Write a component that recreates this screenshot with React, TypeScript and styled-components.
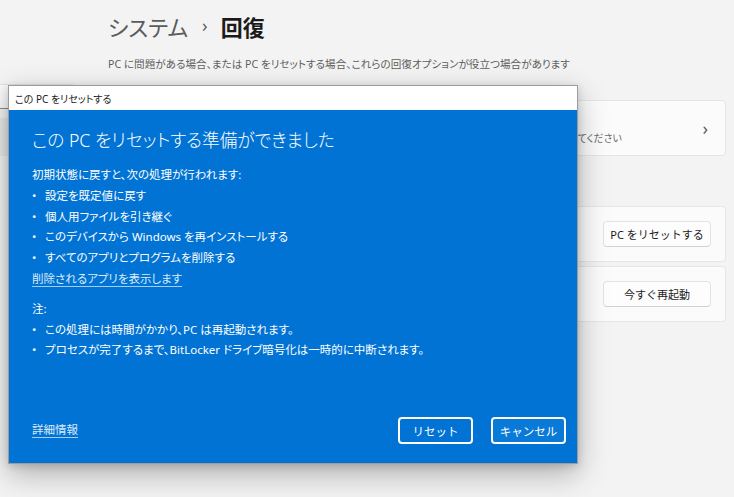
import styled, { createGlobalStyle } from "styled-components";

const GlobalStyle = createGlobalStyle`
  html, body {
    margin: 0;
    padding: 0;
    background: #f3f3f3;
  }
  body {
    font-family: "Noto Sans", "Noto Sans CJK JP", sans-serif;
    font-feature-settings: "palt";
  }
`;

const resetItems = [
  "設定を既定値に戻す",
  "個人用ファイルを引き継ぐ",
  "このデバイスから Windows を再インストールする",
  "すべてのアプリとプログラムを削除する",
];

const notes = [
  "この処理には時間がかかり、PC は再起動されます。",
  "プロセスが完了するまで、BitLocker ドライブ暗号化は一時的に中断されます。",
];

export default function App() {
  return (
    <>
      <GlobalStyle />
      <Screen>
        <Sidebar>
          <SearchBox />
          <NavItem active />
          <NavItem>
            <NavLabel>アカウント</NavLabel>
          </NavItem>
        </Sidebar>
        <Main>
          <Breadcrumb>
            <Crumb>システム</Crumb>
            <Sep>›</Sep>
            <Current>回復</Current>
          </Breadcrumb>
          <Subtitle>
            PC に問題がある場合、または PC をリセットする場合、これらの回復オプションが役立つ場合があります
          </Subtitle>
          <FixCard>
            <CardText>
              <CardTitle>問題の修正</CardTitle>
              <CardDesc>
                PC をリセットする前に、トラブルシューティング ツールを実行して、PC の問題を解決できるかどうか試してみてください
              </CardDesc>
            </CardText>
            <Chevron>›</Chevron>
          </FixCard>
          <SectionTitle>回復オプション</SectionTitle>
          <CardGroup>
            <Card>
              <CardText>
                <CardTitle>この PC をリセット</CardTitle>
              </CardText>
              <PageButton>PC をリセットする</PageButton>
            </Card>
            <Card>
              <CardText>
                <CardTitle>高度なスタートアップ</CardTitle>
              </CardText>
              <PageButton>今すぐ再起動</PageButton>
            </Card>
          </CardGroup>
        </Main>

        <Dialog>
          <TitleBar>この PC をリセットする</TitleBar>
          <Body>
            <Heading>この PC をリセットする準備ができました</Heading>
            <Content>
              <Line>初期状態に戻すと、次の処理が行われます:</Line>
              <List>
                {resetItems.map((t) => (
                  <li key={t}>{t}</li>
                ))}
              </List>
              <Link>削除されるアプリを表示します</Link>
              <Line spaced>注:</Line>
              <List>
                {notes.map((t) => (
                  <li key={t}>{t}</li>
                ))}
              </List>
            </Content>
            <Footer>
              <Link>詳細情報</Link>
              <Buttons>
                <DialogButton>リセット</DialogButton>
                <DialogButton focused>キャンセル</DialogButton>
              </Buttons>
            </Footer>
          </Body>
        </Dialog>
      </Screen>
    </>
  );
}

const Screen = styled.div`
  position: relative;
  width: 734px;
  height: 497px;
  overflow: hidden;
  display: flex;
  background: #f3f3f3;
`;

const Sidebar = styled.div`
  width: 75px;
  flex-shrink: 0;
  padding-top: 84px;
  display: flex;
  flex-direction: column;
  overflow: hidden;
`;

const SearchBox = styled.div`
  height: 23px;
  background: #f9f9f9;
  border-top: 1px solid #e2e2e2;
  border-bottom: 1px solid #8a8a8a;
  border-right: 1px solid #e2e2e2;
  border-radius: 0 4px 4px 0;
`;

const NavItem = styled.div<{ active?: boolean }>`
  height: 38px;
  margin-top: ${(p) => (p.active ? "9px" : "33px")};
  background: ${(p) => (p.active ? "#e9e9e9" : "transparent")};
  display: flex;
  align-items: center;
  font-size: 11px;
  color: #1a1a1a;
  white-space: nowrap;
`;

const NavLabel = styled.span`
  margin-left: -48px;
`;

const Main = styled.div`
  flex: 1;
  min-width: 0;
  padding: 9px 8px 0 33px;
  display: flex;
  flex-direction: column;
`;

const Breadcrumb = styled.div`
  display: flex;
  align-items: center;
  height: 34px;
  font-size: 22px;
`;

const Crumb = styled.span`
  color: #5b5b5b;
`;

const Sep = styled.span`
  color: #5b5b5b;
  font-size: 18px;
  margin: 0 13px 2px 14px;
`;

const Current = styled.span`
  color: #1b1b1b;
  font-weight: 700;
`;

const Subtitle = styled.div`
  margin-top: 13px;
  font-size: 10.6px;
  line-height: 16px;
  color: #5e5e5e;
  white-space: nowrap;
`;

const Card = styled.div`
  height: 54px;
  padding: 0 14px 0 16px;
  display: flex;
  align-items: center;
  justify-content: space-between;
  gap: 12px;
  background: #fbfbfb;
  border: 1px solid #e6e6e6;
  border-radius: 4px;
`;

const FixCard = styled(Card)`
  margin-top: 28px;
  padding-right: 17px;
`;

const CardText = styled.div`
  flex: 1;
  min-width: 0;
  display: flex;
  flex-direction: column;
  gap: 2px;
  white-space: nowrap;
  overflow: hidden;
`;

const CardTitle = styled.div`
  font-size: 11px;
  color: #1b1b1b;
`;

const CardDesc = styled.div`
  font-size: 10px;
  color: #6a6a6a;
`;

const Chevron = styled.span`
  font-size: 18px;
  line-height: 18px;
  color: #5b5b5b;
`;

const SectionTitle = styled.div`
  margin: 20px 0 14px;
  font-size: 11px;
  font-weight: 700;
  color: #1b1b1b;
`;

const CardGroup = styled.div`
  display: flex;
  flex-direction: column;
  gap: 4px;
`;

const PageButton = styled.button`
  width: 108px;
  height: 26px;
  flex-shrink: 0;
  font-family: inherit;
  font-size: 11px;
  color: #1b1b1b;
  background: #fdfdfd;
  border: 1px solid #e3e3e3;
  border-bottom-color: #d2d2d2;
  border-radius: 4px;
`;

const Dialog = styled.div`
  position: absolute;
  left: 8px;
  top: 85px;
  width: 570px;
  height: 379px;
  box-sizing: border-box;
  border: 1px solid #9c9c9c;
  display: flex;
  flex-direction: column;
  box-shadow: 0 10px 28px rgba(0, 0, 0, 0.28), 0 2px 8px rgba(0, 0, 0, 0.15);
`;

const TitleBar = styled.div`
  height: 24px;
  flex-shrink: 0;
  background: #ffffff;
  display: flex;
  align-items: center;
  padding-left: 6px;
  font-size: 10px;
  color: #1a1a1a;
`;

const Body = styled.div`
  flex: 1;
  background: #0173d4;
  color: #ffffff;
  padding: 16px 11px 19px 23px;
  display: flex;
  flex-direction: column;
`;

const Heading = styled.div`
  font-size: 17.7px;
  font-weight: 300;
  line-height: 28px;
`;

const Content = styled.div`
  margin-top: 11px;
  flex: 1;
  font-size: 11.5px;
  line-height: 20.8px;
`;

const Line = styled.div<{ spaced?: boolean }>`
  margin-top: ${(p) => (p.spaced ? "9px" : "0")};
`;

const List = styled.ul`
  list-style: none;
  margin: 0;
  padding: 0;
  li {
    position: relative;
    padding-left: 13px;
  }
  li::before {
    content: "•";
    position: absolute;
    left: 0;
  }
`;

const Link = styled.a`
  display: inline-block;
  color: #dcebfa;
  font-size: 11.5px;
  line-height: 20.8px;
  text-decoration: underline;
  text-decoration-color: rgba(220, 235, 250, 0.75);
  text-underline-offset: 3px;
`;

const Footer = styled.div`
  display: flex;
  align-items: center;
  justify-content: space-between;
`;

const Buttons = styled.div`
  display: flex;
  gap: 18px;
`;

const DialogButton = styled.button<{ focused?: boolean }>`
  width: 75px;
  height: 27px;
  font-family: inherit;
  font-size: 11.5px;
  color: #ffffff;
  background: ${(p) => (p.focused ? "#0a7ad9" : "#0173d4")};
  border: 2px solid #ffffff;
  border-radius: 4px;
`;
